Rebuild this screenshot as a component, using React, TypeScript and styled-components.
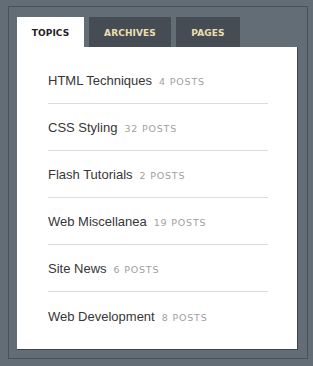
import React from "react";
import styled, { createGlobalStyle } from "styled-components";

const Global = createGlobalStyle`
  html, body {
    margin: 0;
    padding: 0;
    background: #636d75;
  }
`;

const Page = styled.div`
  padding: 6px 0 0 8px;
  width: 313px;
  height: 366px;
  box-sizing: border-box;
`;

const Box = styled.div`
  width: 300px;
  box-sizing: border-box;
  border: 1px solid #4a5259;
  padding: 10px 9px 8px 8px;
`;

const Tabs = styled.div`
  display: flex;
  gap: 5px;
`;

const Tab = styled.div<{ $active?: boolean; $w: number }>`
  width: ${(p) => p.$w}px;
  height: 30px;
  display: flex;
  align-items: center;
  justify-content: center;
  background: ${(p) => (p.$active ? "#ffffff" : "#464c54")};
  color: ${(p) => (p.$active ? "#1f2226" : "#ecdfae")};
  font-family: "DejaVu Sans", Verdana, sans-serif;
  font-weight: bold;
  font-size: 9px;
  letter-spacing: 0.1px;
  padding-top: 1px;
  box-sizing: border-box;
`;

const Panel = styled.div`
  background: #ffffff;
  border-right: 1px solid #3e444a;
  border-bottom: 1px solid #3e444a;
  padding: 10px 29px 10px 31px;
`;

const List = styled.ul`
  list-style: none;
  margin: 0;
  padding: 0;
`;

const Row = styled.li`
  height: 47px;
  display: flex;
  align-items: center;
  box-sizing: border-box;
  border-bottom: 1px solid #dcdcdc;
  padding-top: 1px;
  &:last-child {
    border-bottom: none;
  }
`;

const Title = styled.span`
  font-family: "Liberation Sans", Arial, sans-serif;
  font-size: 13px;
  color: #363636;
`;

const Count = styled.span`
  margin-left: 7px;
  font-family: "DejaVu Sans", Verdana, sans-serif;
  font-size: 9.5px;
  letter-spacing: 0.8px;
  color: #a0a0a0;
  padding-top: 2px;
`;

const topics = [
  { name: "HTML Techniques", posts: 4 },
  { name: "CSS Styling", posts: 32 },
  { name: "Flash Tutorials", posts: 2 },
  { name: "Web Miscellanea", posts: 19 },
  { name: "Site News", posts: 6 },
  { name: "Web Development", posts: 8 },
];

export default function App() {
  return (
    <>
      <Global />
      <Page>
        <Box>
          <Tabs>
            <Tab $active $w={67}>TOPICS</Tab>
            <Tab $w={82}>ARCHIVES</Tab>
            <Tab $w={64}>PAGES</Tab>
          </Tabs>
          <Panel>
            <List>
              {topics.map((t) => (
                <Row key={t.name}>
                  <Title>{t.name}</Title>
                  <Count>{t.posts} POSTS</Count>
                </Row>
              ))}
            </List>
          </Panel>
        </Box>
      </Page>
    </>
  );
}
